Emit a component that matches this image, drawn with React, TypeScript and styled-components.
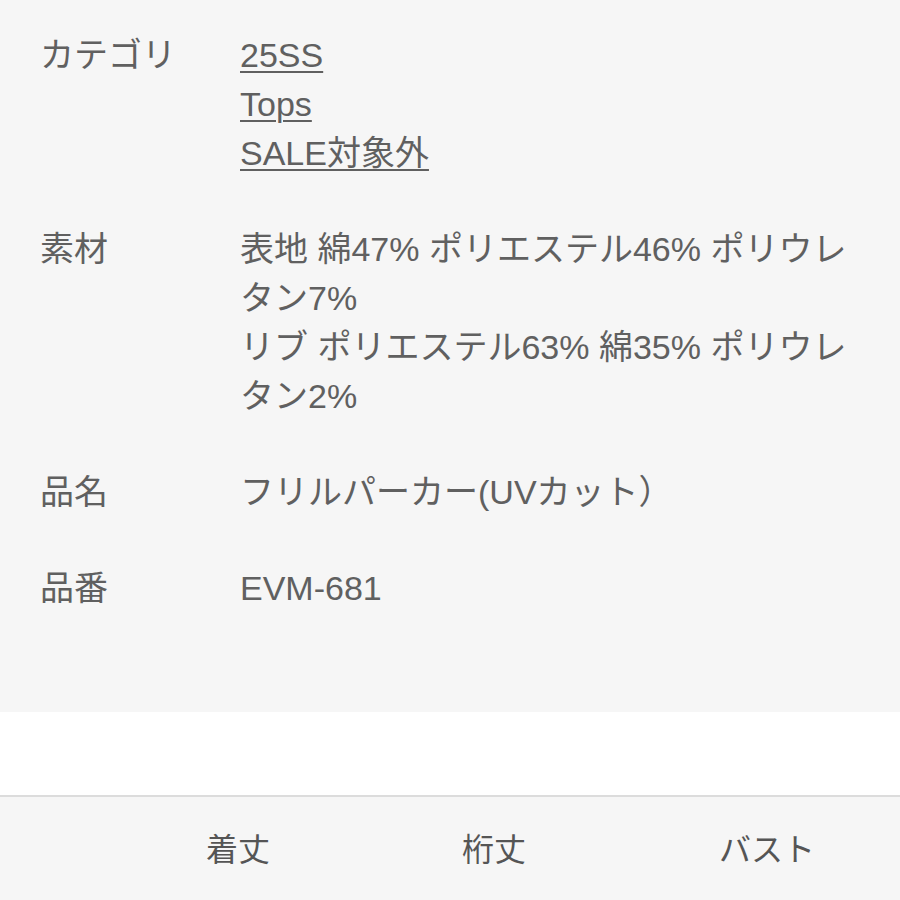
import styled, { createGlobalStyle } from 'styled-components';

const GlobalStyle = createGlobalStyle`
  html, body {
    margin: 0;
    padding: 0;
    background: #f6f6f6;
  }
  body {
    font-family: "Liberation Sans", "Noto Sans CJK JP", sans-serif;
    color: #606060;
  }
`;

interface specRow {
  label: string;
  values: string[];
  link?: boolean;
}

const specs: specRow[] = [
  { label: 'カテゴリ', values: ['25SS', 'Tops', 'SALE対象外'], link: true },
  {
    label: '素材',
    values: ['表地 綿47% ポリエステル46% ポリウレタン7%', 'リブ ポリエステル63% 綿35% ポリウレタン2%'],
  },
  { label: '品名', values: ['フリルパーカー(UVカット）'] },
  { label: '品番', values: ['EVM-681'] },
];

const sizeColumns = ['着丈', '桁丈', 'バスト'];

const App = () => {
  return (
    <>
      <GlobalStyle />
      <Page>
        <SpecList>
          {specs.map((row) => (
            <SpecRow key={row.label}>
              <Label>{row.label}</Label>
              <Value>
                {row.values.map((v) =>
                  row.link ? (
                    <CategoryLink key={v} href="#">
                      {v}
                    </CategoryLink>
                  ) : (
                    <Line key={v}>{v}</Line>
                  ),
                )}
              </Value>
            </SpecRow>
          ))}
        </SpecList>
        <WhiteBand />
        <SizeHeader>
          <HeaderCell />
          {sizeColumns.map((c) => (
            <HeaderCell key={c}>{c}</HeaderCell>
          ))}
        </SizeHeader>
      </Page>
    </>
  );
};

export default App;

const Page = styled.div`
  width: 900px;
  height: 900px;
  overflow: hidden;
  background: #f6f6f6;
`;

const SpecList = styled.dl`
  box-sizing: border-box;
  height: 712px;
  margin: 0;
  padding: 31px 35px 0 40px;
  display: flex;
  flex-direction: column;
  gap: 47px;
`;

const SpecRow = styled.div`
  display: grid;
  grid-template-columns: 200px 1fr;
  font-size: 34px;
  line-height: 49px;
`;

const Label = styled.dt`
  margin: 0;
`;

const Value = styled.dd`
  margin: 0;
  display: flex;
  flex-direction: column;
  align-items: flex-start;
`;

const Line = styled.span`
  display: block;
`;

const CategoryLink = styled.a`
  color: #606060;
  text-decoration: underline;
  text-decoration-thickness: 2px;
  text-underline-offset: 4px;
`;

const WhiteBand = styled.div`
  height: 83px;
  background: #ffffff;
  border-bottom: 2px solid #dcdcdc;
`;

const SizeHeader = styled.div`
  display: grid;
  grid-template-columns: 110px 256px 256px 1fr;
  align-items: center;
  height: 100px;
  font-size: 32px;
  color: #555;
`;

const HeaderCell = styled.div`
  text-align: center;

  &:last-child {
    padding-left: 12px;
  }
`;
